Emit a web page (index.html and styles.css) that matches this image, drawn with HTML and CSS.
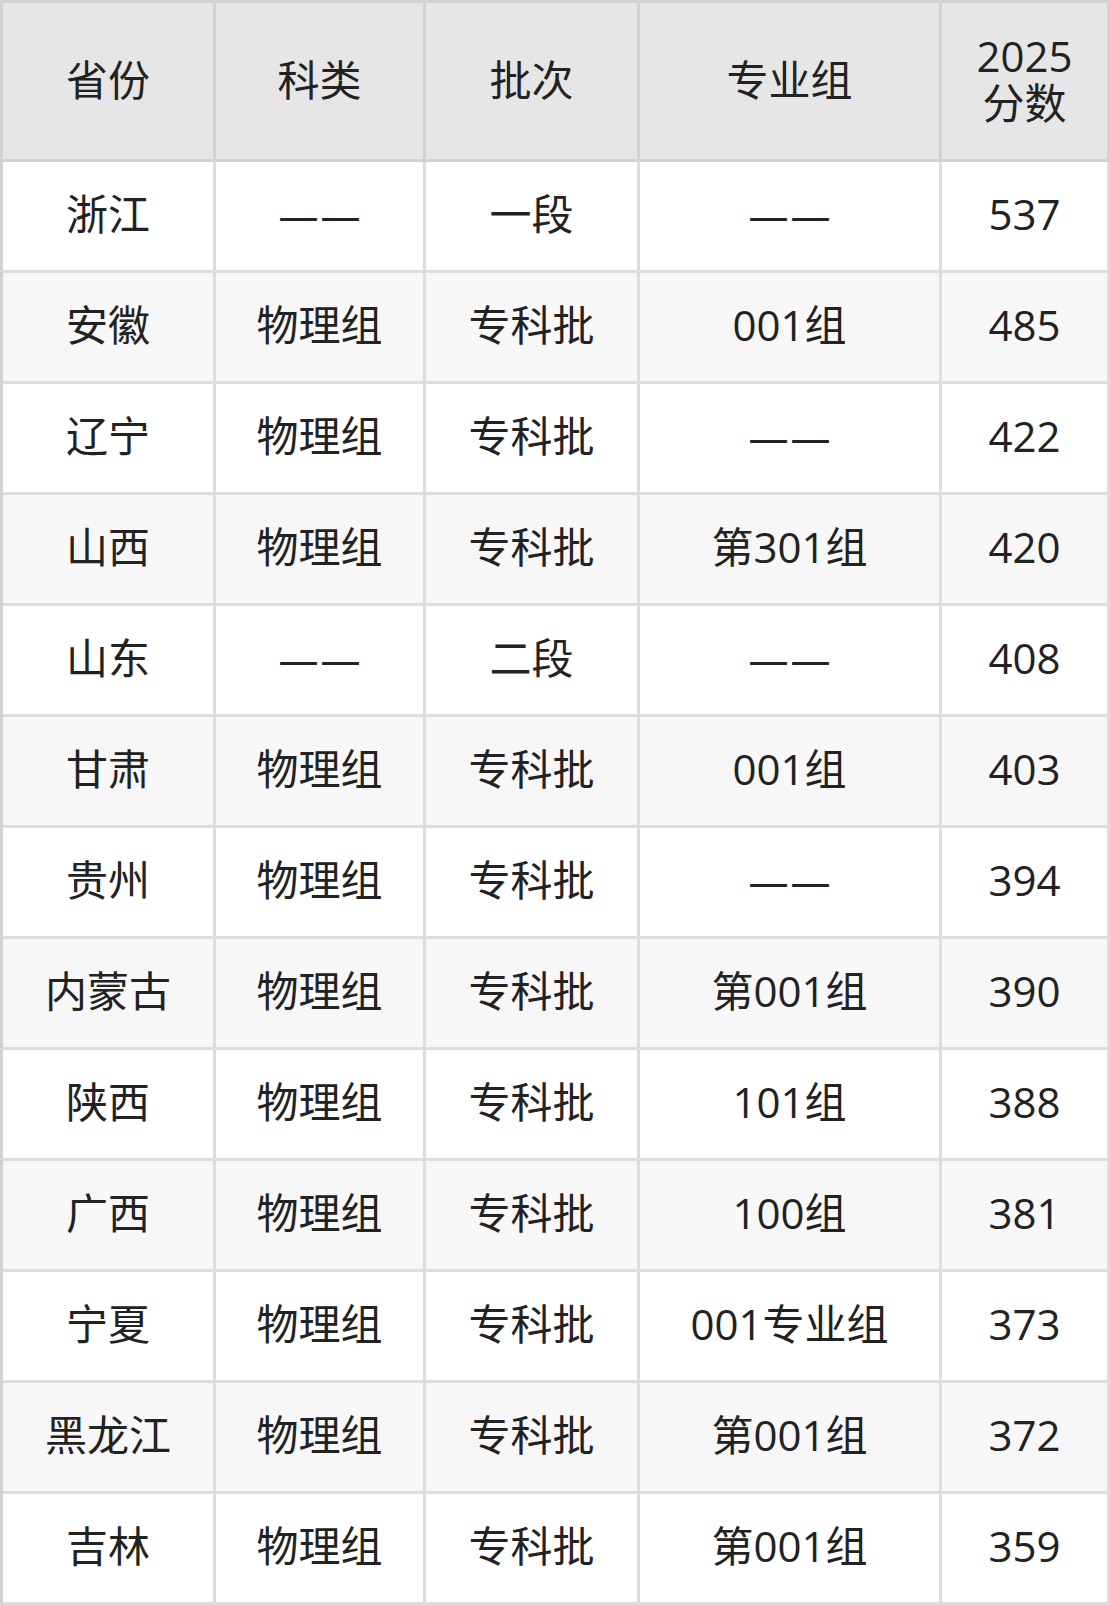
FILE: index.html
```html
<!DOCTYPE html>
<html lang="zh-CN">
<head>
<meta charset="utf-8">
<title>分数线</title>
<link rel="stylesheet" href="styles.css">
</head>
<body>
<table class="score-table">
  <colgroup>
    <col class="c1"><col class="c2"><col class="c3"><col class="c4"><col class="c5">
  </colgroup>
  <thead>
    <tr>
      <th>省份</th><th>科类</th><th>批次</th><th>专业组</th><th>2025<br>分数</th>
    </tr>
  </thead>
  <tbody>
    <tr><td>浙江</td><td><span class="dash">——</span></td><td>一段</td><td><span class="dash">——</span></td><td>537</td></tr>
    <tr><td>安徽</td><td>物理组</td><td>专科批</td><td>001组</td><td>485</td></tr>
    <tr><td>辽宁</td><td>物理组</td><td>专科批</td><td><span class="dash">——</span></td><td>422</td></tr>
    <tr><td>山西</td><td>物理组</td><td>专科批</td><td>第301组</td><td>420</td></tr>
    <tr><td>山东</td><td><span class="dash">——</span></td><td>二段</td><td><span class="dash">——</span></td><td>408</td></tr>
    <tr><td>甘肃</td><td>物理组</td><td>专科批</td><td>001组</td><td>403</td></tr>
    <tr><td>贵州</td><td>物理组</td><td>专科批</td><td><span class="dash">——</span></td><td>394</td></tr>
    <tr><td>内蒙古</td><td>物理组</td><td>专科批</td><td>第001组</td><td>390</td></tr>
    <tr><td>陕西</td><td>物理组</td><td>专科批</td><td>101组</td><td>388</td></tr>
    <tr><td>广西</td><td>物理组</td><td>专科批</td><td>100组</td><td>381</td></tr>
    <tr><td>宁夏</td><td>物理组</td><td>专科批</td><td>001专业组</td><td>373</td></tr>
    <tr><td>黑龙江</td><td>物理组</td><td>专科批</td><td>第001组</td><td>372</td></tr>
    <tr><td>吉林</td><td>物理组</td><td>专科批</td><td>第001组</td><td>359</td></tr>
  </tbody>
</table>
</body>
</html>
```

FILE: styles.css
```css
html, body {
  margin: 0;
  padding: 0;
  background: #ffffff;
}

.score-table {
  width: 1110px;
  table-layout: fixed;
  border-collapse: separate;
  border-spacing: 0;
  border-top: 3px solid #d2d2d2;
  border-left: 3px solid #d2d2d2;
  font-family: "Open Sans", "Noto Sans CJK SC", sans-serif;
  font-size: 42px;
  color: #222222;
}

.c1 { width: 213px; }
.c2 { width: 210px; }
.c3 { width: 214px; }
.c4 { width: 302px; }
.c5 { width: 168px; }

.score-table th,
.score-table td {
  box-sizing: border-box;
  padding: 0;
  text-align: center;
  vertical-align: middle;
  font-weight: 400;
}

.score-table th {
  height: 159px;
  line-height: 47px;
  padding-bottom: 4px;
  background: #e6e6e6;
  border-right: 3px solid #d2d2d2;
  border-bottom: 3px solid #d2d2d2;
}

.score-table td {
  height: 111px;
  line-height: 50px;
  padding-bottom: 4px;
  background: #ffffff;
  border-right: 3px solid #dddddd;
  border-bottom: 3px solid #dddddd;
}

.score-table tbody tr:nth-child(even) td {
  background: #f7f7f7;
}

.dash {
  display: inline-block;
  font-family: "Open Sans", sans-serif;
  font-size: 40px;
  letter-spacing: 2px;
  margin-right: -2px;
}
```
